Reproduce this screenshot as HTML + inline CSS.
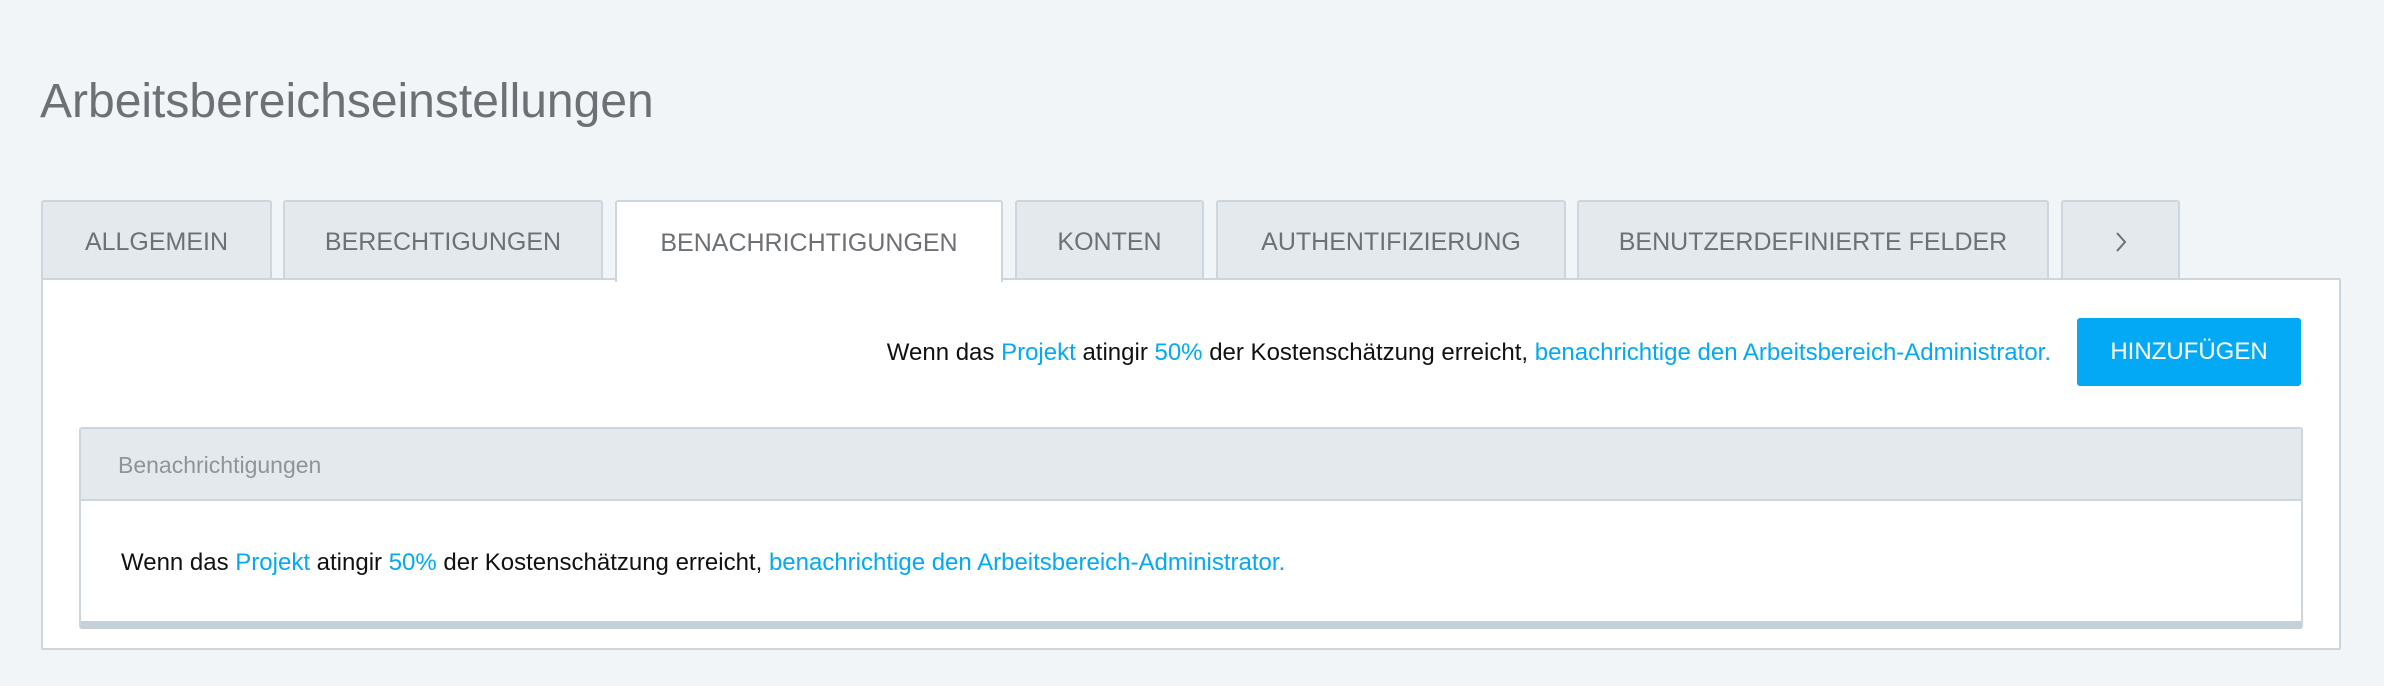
<!DOCTYPE html>
<html><head><meta charset="utf-8"><style>
*{box-sizing:border-box;margin:0;padding:0}
body{width:2384px;height:686px;background:#f2f5f8;font-family:"Liberation Sans",sans-serif;position:relative;overflow:hidden}
.title{position:absolute;left:40px;top:72px;font-size:48px;color:#6d7175;line-height:60px}
.tab{position:absolute;top:200px;height:79px;background:#e4e9ed;border:2px solid #cdd6dd;border-bottom:none;border-radius:3px 3px 0 0;color:#6d7175;font-size:25px;display:flex;align-items:center;justify-content:center;padding-top:3px}
.tab.act{background:#fff;height:82px;z-index:2}
.panel{position:absolute;left:41px;top:278px;width:2300px;height:372px;background:#fff;border:2px solid #cdd6dd;border-radius:2px}
.b{color:#03a9f4}
.row{position:absolute;top:339px;width:2050px;text-align:right;font-size:24px;color:#111;z-index:3;right:333px}
.btn{position:absolute;left:2077px;top:318px;width:224px;height:68px;background:#03a9f4;border-radius:3px;color:#fff;font-size:24px;display:flex;align-items:center;justify-content:center;z-index:3}
.tbl{position:absolute;left:79px;top:427px;width:2224px;height:202px;border:2px solid #cdd6dd;border-bottom:8px solid #c5d1d9;border-radius:3px;background:#fff;z-index:3}
.hd{height:72px;background:#e4e9ed;border-bottom:2px solid #cdd6dd;font-size:23px;color:#8f9498;padding-left:37px;line-height:72px}
.bd{font-size:24px;color:#111;padding-left:40px;padding-top:48px}
</style></head><body>
<div class="title">Arbeitsbereichseinstellungen</div>
<div class="tab" style="left:41px;width:231px">ALLGEMEIN</div>
<div class="tab" style="left:283px;width:320px">BERECHTIGUNGEN</div>
<div class="tab act" style="left:615px;width:388px">BENACHRICHTIGUNGEN</div>
<div class="tab" style="left:1015px;width:189px">KONTEN</div>
<div class="tab" style="left:1216px;width:350px">AUTHENTIFIZIERUNG</div>
<div class="tab" style="left:1577px;width:472px">BENUTZERDEFINIERTE FELDER</div>
<div class="tab" style="left:2061px;width:119px"><svg width="14" height="24" viewBox="0 0 14 24"><path d="M3 3 L11 12 L3 21" fill="none" stroke="#6d7175" stroke-width="2"/></svg></div>
<div class="panel"></div>
<div class="row">Wenn das <span class="b">Projekt</span> atingir <span class="b">50%</span> der Kostenschätzung erreicht, <span class="b">benachrichtige den Arbeitsbereich-Administrator.</span></div>
<div class="btn">HINZUFÜGEN</div>
<div class="tbl"><div class="hd">Benachrichtigungen</div>
<div class="bd">Wenn das <span class="b">Projekt</span> atingir <span class="b">50%</span> der Kostenschätzung erreicht, <span class="b">benachrichtige den Arbeitsbereich-Administrator.</span></div></div>
</body></html>
